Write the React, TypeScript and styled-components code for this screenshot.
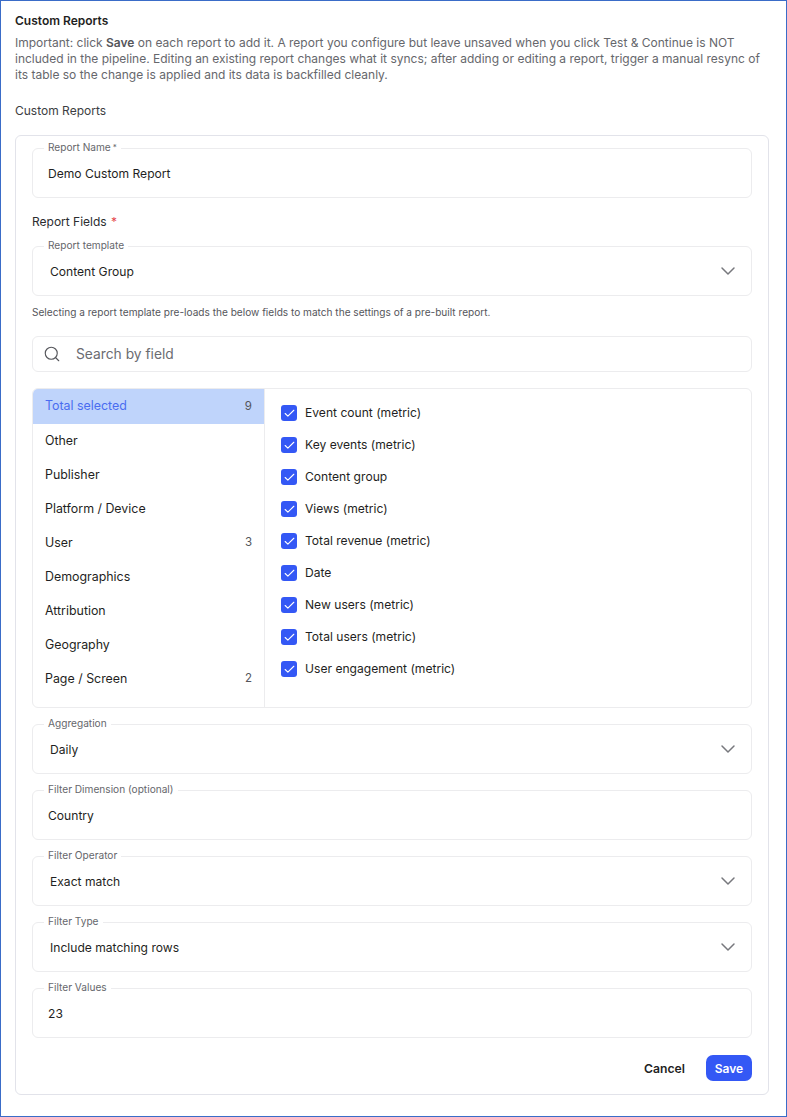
import React from 'react'
import styled, { createGlobalStyle } from 'styled-components'
import { Check, ChevronDown, Search } from 'lucide-react'

const categories = [
  { name: 'Total selected', count: 9, active: true },
  { name: 'Other' },
  { name: 'Publisher' },
  { name: 'Platform / Device' },
  { name: 'User', count: 3 },
  { name: 'Demographics' },
  { name: 'Attribution' },
  { name: 'Geography' },
  { name: 'Page / Screen', count: 2 },
]

const fields = [
  'Event count (metric)',
  'Key events (metric)',
  'Content group',
  'Views (metric)',
  'Total revenue (metric)',
  'Date',
  'New users (metric)',
  'Total users (metric)',
  'User engagement (metric)',
]

const TextField = ({ label, value, required }: { label: string; value: string; required?: boolean }) => (
  <Field>
    <FloatLabel>{label}{required && <Star>*</Star>}</FloatLabel>
    <Value>{value}</Value>
  </Field>
)

const SelectField = ({ label, value }: { label: string; value: string }) => (
  <Field $select>
    <FloatLabel>{label}</FloatLabel>
    <Value>{value}</Value>
    <ChevronDown size={24} strokeWidth={1.5} color="#77787d" />
  </Field>
)

export default function App() {
  return (
    <>
      <GlobalStyle />
      <Page>
        <Title>Custom Reports</Title>
        <Description>
          Important: click <b>Save</b> on each report to add it. A report you configure but leave unsaved when you click Test &amp; Continue is NOT
          included in the pipeline. Editing an existing report changes what it syncs; after adding or editing a report, trigger a manual resync of
          its table so the change is applied and its data is backfilled cleanly.
        </Description>
        <SectionLabel>Custom Reports</SectionLabel>
        <Card>
          <TextField label="Report Name" value="Demo Custom Report" required />
          <FieldsHeading>Report Fields <Required>*</Required></FieldsHeading>
          <SelectField label="Report template" value="Content Group" />
          <Helper>Selecting a report template pre-loads the below fields to match the settings of a pre-built report.</Helper>
          <SearchBox>
            <Search size={18} strokeWidth={1.5} color="#55565b" />
            <span>Search by field</span>
          </SearchBox>
          <Picker>
            <CategoryList>
              {categories.map((c) => (
                <Category key={c.name} $active={c.active}>
                  <span>{c.name}</span>
                  {c.count && <Count>{c.count}</Count>}
                </Category>
              ))}
            </CategoryList>
            <FieldList>
              {fields.map((f) => (
                <FieldRow key={f}>
                  <Box><Check size={13} strokeWidth={2} color="#fff" /></Box>
                  <FieldName>{f}</FieldName>
                </FieldRow>
              ))}
            </FieldList>
          </Picker>
          <SelectField label="Aggregation" value="Daily" />
          <TextField label="Filter Dimension (optional)" value="Country" />
          <SelectField label="Filter Operator" value="Exact match" />
          <SelectField label="Filter Type" value="Include matching rows" />
          <TextField label="Filter Values" value="23" />
          <Actions>
            <CancelButton>Cancel</CancelButton>
            <SaveButton>Save</SaveButton>
          </Actions>
        </Card>
      </Page>
    </>
  )
}

const GlobalStyle = createGlobalStyle`
  html, body {
    margin: 0;
    padding: 0;
    background: #fff;
  }
  * {
    box-sizing: border-box;
  }
  body {
    font-family: Inter, "Liberation Sans", sans-serif;
    color: #1b1b1f;
  }
`
const Page = styled.div`
  width: 787px;
  height: 1117px;
  border: 1px solid #3a6cc8;
  padding: 12px 17px 0 14px;
  overflow: hidden;
`
const Title = styled.div`
  font-size: 12px;
  line-height: 16px;
  font-weight: 600;
  color: #1f1f23;
`
const Description = styled.div`
  margin-top: 6px;
  width: 760px;
  font-size: 12px;
  line-height: 16px;
  color: #66676c;
  b {
    font-weight: 600;
    color: #55565b;
  }
`
const SectionLabel = styled.div`
  margin-top: 20px;
  font-size: 12px;
  line-height: 16px;
  color: #3c3d42;
`
const Card = styled.div`
  margin-top: 16px;
  width: 754px;
  height: 960px;
  border: 1px solid #e2e3ea;
  border-radius: 6px;
  padding: 12px 16px;
  display: flex;
  flex-direction: column;
  gap: 16px;
`
const Field = styled.div<{ $select?: boolean }>`
  position: relative;
  height: 50px;
  flex: none;
  border: 1px solid #ececee;
  border-radius: 6px;
  padding: 0 11px 0 ${(p) => (p.$select ? 17 : 15)}px;
  display: flex;
  align-items: center;
  justify-content: space-between;
`
const FloatLabel = styled.label`
  position: absolute;
  top: -8px;
  left: 11px;
  padding: 0 4px;
  background: #fff;
  font-size: 10.15px;
  line-height: 13px;
  color: #66676c;
`
const Star = styled.span`
  margin-left: 2px;
  font-size: 8px;
  vertical-align: 1px;
`
const Value = styled.div`
  font-size: 12.1px;
  color: #1f1f23;
`
const FieldsHeading = styled.div`
  height: 16px;
  font-size: 12px;
  line-height: 16px;
  color: #2b2c30;
`
const Required = styled.span`
  margin-left: 1px;
  color: #e5484d;
`
const Helper = styled.div`
  margin-top: -8px;
  height: 16px;
  font-size: 10.1px;
  line-height: 16px;
  color: #55565b;
`
const SearchBox = styled.div`
  height: 36px;
  flex: none;
  border: 1px solid #ececee;
  border-radius: 6px;
  padding: 0 10px;
  display: flex;
  align-items: center;
  gap: 15px;
  font-size: 13.8px;
  color: #6b6c71;
`
const Picker = styled.div`
  height: 320px;
  flex: none;
  border: 1px solid #ececee;
  border-radius: 6px;
  display: flex;
  overflow: hidden;
`
const CategoryList = styled.div`
  width: 232px;
  flex: none;
  border-right: 1px solid #ececee;
`
const Category = styled.div<{ $active?: boolean }>`
  height: ${(p) => (p.$active ? 35 : 34)}px;
  padding: 0 12px 2px;
  display: flex;
  align-items: center;
  justify-content: space-between;
  font-size: 12.4px;
  background: ${(p) => (p.$active ? '#bfd4fb' : 'transparent')};
  color: ${(p) => (p.$active ? '#4a6cf0' : '#1f1f23')};
`
const Count = styled.span`
  font-size: 11.5px;
  color: #55565b;
`
const FieldList = styled.div`
  padding: 8px 16px;
  display: flex;
  flex-direction: column;
`
const FieldRow = styled.div`
  height: 32px;
  display: flex;
  align-items: center;
  gap: 8px;
  font-size: 12.1px;
  color: #1f1f23;
`
const FieldName = styled.span`
  padding-bottom: 2px;
`
const Box = styled.div`
  width: 16px;
  height: 16px;
  border-radius: 3px;
  background: #3458f5;
  display: flex;
  align-items: center;
  justify-content: center;
`
const Actions = styled.div`
  margin-top: 1px;
  display: flex;
  justify-content: flex-end;
  align-items: center;
  gap: 8px;
`
const CancelButton = styled.button`
  height: 26px;
  padding: 0 13px 0 12px;
  border: 0;
  background: none;
  font: 600 12.2px Inter, sans-serif;
  color: #1f1f23;
`
const SaveButton = styled.button`
  height: 26px;
  width: 46px;
  border: 0;
  border-radius: 7px;
  background: #3458f5;
  font: 600 12px Inter, sans-serif;
  color: #fff;
`
